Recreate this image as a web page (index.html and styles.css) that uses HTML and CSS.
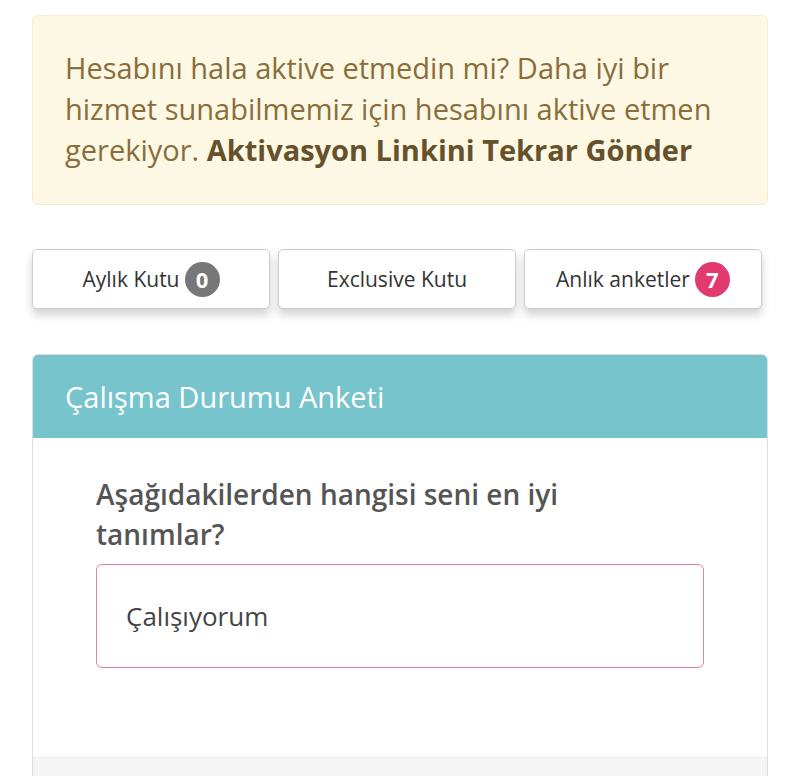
FILE: index.html
```html
<!DOCTYPE html>
<html>
<head>
  <title>Anketler</title>
  <link rel="stylesheet" href="styles.css">
</head>
<body>
  <div id="page">
    <div class="alert">
      Hesabını hala aktive etmedin mi? Daha iyi bir hizmet sunabilmemiz için hesabını aktive etmen gerekiyor. <b>Aktivasyon Linkini Tekrar Gönder</b>
    </div>

    <div class="tabs">
      <button class="tab">Aylık Kutu <span class="badge">0</span></button>
      <button class="tab">Exclusive Kutu</button>
      <button class="tab">Anlık anketler <span class="badge badge-pink">7</span></button>
    </div>

    <div class="panel">
      <div class="panel-heading">Çalışma Durumu Anketi</div>
      <div class="panel-body">
        <h3 class="question">Aşağıdakilerden hangisi seni en iyi tanımlar?</h3>
        <div class="option">Çalışıyorum</div>
      </div>
      <div class="panel-footer"></div>
    </div>
  </div>
</body>
</html>
```

FILE: styles.css
```css
body {
  margin: 0;
  font-family: "Open Sans", sans-serif;
  background-color: #fff;
  color: #333;
}

#page {
  padding: 15px 32px 0 32px;
}

.alert {
  background-color: #fcf8e3;
  border: 1px solid #faebcc;
  border-radius: 6px;
  color: #8a6d3b;
  font-size: 29px;
  line-height: 41px;
  padding: 31px 32px 34px 32px;
}

.alert b {
  color: #66512c;
  font-weight: 700;
}

.tabs {
  display: grid;
  grid-template-columns: repeat(3, 1fr);
  gap: 8px;
  margin-top: 44px;
  width: 730px;
}

.tab {
  height: 60px;
  background-color: #fff;
  border: 1px solid #ccc;
  border-radius: 5px;
  box-shadow: 0 6px 10px rgba(0, 0, 0, 0.18);
  font-family: "Open Sans", sans-serif;
  font-size: 21px;
  color: #333;
  display: flex;
  align-items: center;
  justify-content: center;
  gap: 5px;
}

.badge {
  display: inline-flex;
  align-items: center;
  justify-content: center;
  width: 35px;
  height: 35px;
  border-radius: 50%;
  background-color: #777;
  color: #fff;
  font-weight: 700;
  font-size: 22px;
}

.badge-pink {
  background-color: #e03a6e;
}

.panel {
  margin-top: 45px;
  border: 1px solid #ddd;
  border-radius: 6px 6px 0 0;
  overflow: hidden;
}

.panel-heading {
  background-color: #77c4cc;
  color: #fff;
  font-size: 29px;
  height: 83px;
  display: flex;
  align-items: center;
  padding-left: 32px;
}

.panel-body {
  padding: 36px 63px 89px 63px;
}

.question {
  margin: 0 0 10px 0;
  max-width: 520px;
  font-size: 28px;
  font-weight: 600;
  line-height: 40px;
  color: #555;
}

.option {
  border: 1.5px solid #d9869c;
  border-radius: 6px;
  height: 102px;
  display: flex;
  align-items: center;
  padding-left: 29px;
  font-size: 26px;
  color: #444;
}

.panel-footer {
  background-color: #f5f5f5;
  border-top: 1px solid #eee;
  height: 40px;
}
```
